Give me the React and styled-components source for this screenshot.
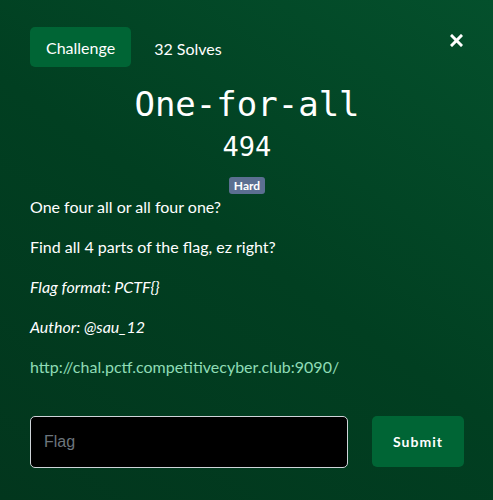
import React from "react";
import styled, { createGlobalStyle } from "styled-components";

const GlobalStyle = createGlobalStyle`
  * { box-sizing: border-box; }
  body {
    margin: 0;
    font-family: Lato, "Noto Sans", sans-serif;
    background: #013d21;
  }
`;

const App = () => {
  return (
    <>
      <GlobalStyle />
      <Modal>
        <Header>
          <Tab>Challenge</Tab>
          <Solves>32 Solves</Solves>
          <Close aria-label="close">
            <svg width="13" height="13" viewBox="0 0 13 13">
              <path
                d="M2 2 L11 11 M11 2 L2 11"
                stroke="#fff"
                strokeWidth="3"
                strokeLinecap="square"
              />
            </svg>
          </Close>
        </Header>
        <Title>One-for-all</Title>
        <Points>494</Points>
        <BadgeRow>
          <Badge>Hard</Badge>
        </BadgeRow>
        <Description>
          <p>One four all or all four one?</p>
          <p>Find all 4 parts of the flag, ez right?</p>
          <p>
            <em>Flag format: PCTF{"{}"}</em>
          </p>
          <p>
            <em>Author: @sau_12</em>
          </p>
          <p>
            <a href="#">http://chal.pctf.competitivecyber.club:9090/</a>
          </p>
        </Description>
        <FlagForm onSubmit={(e) => e.preventDefault()}>
          <FlagInput placeholder="Flag" />
          <SubmitButton type="submit">Submit</SubmitButton>
        </FlagForm>
      </Modal>
    </>
  );
};

export default App;

const Modal = styled.div`
  width: 493px;
  height: 500px;
  padding: 27px 29px 0 30px;
  background: linear-gradient(35deg, #02361d 0%, #013f21 50%, #04502c 100%);
  color: #fff;
  overflow: hidden;
`;

const Header = styled.div`
  display: flex;
  align-items: center;
  height: 40px;
`;

const Tab = styled.div`
  background: #006535;
  border-radius: 5px;
  height: 40px;
  padding: 0 16px;
  display: flex;
  align-items: center;
  font-size: 16px;
  color: #fff;
`;

const Solves = styled.div`
  margin-left: 23px;
  font-size: 16px;
  padding-top: 2px;
`;

const Close = styled.button`
  margin-left: auto;
  margin-top: -14px;
  margin-right: 1px;
  background: none;
  border: none;
  padding: 0;
  display: flex;
  cursor: pointer;
`;

const Title = styled.h1`
  margin: 17px 0 0;
  text-align: center;
  font-family: "DejaVu Sans Mono", "Liberation Mono", monospace;
  font-weight: 400;
  font-size: 34px;
  line-height: 40px;
`;

const Points = styled.div`
  text-align: center;
  font-family: "DejaVu Sans Mono", "Liberation Mono", monospace;
  font-size: 27px;
  line-height: 36px;
  margin-top: 5px;
`;

const BadgeRow = styled.div`
  display: flex;
  justify-content: center;
  margin-top: 12px;
`;

const Badge = styled.span`
  background: #5b6f91;
  border-radius: 3px;
  font-size: 12px;
  font-weight: 700;
  line-height: 17px;
  padding: 0 5px;
  color: #fff;
`;

const Description = styled.div`
  margin-top: 1px;
  font-size: 16px;
  line-height: 24px;
  p {
    margin: 0 0 16px;
  }
  a {
    color: #8fdcb6;
    text-decoration: none;
  }
`;

const FlagForm = styled.form`
  display: flex;
  align-items: flex-start;
  margin-top: 37px;
`;

const FlagInput = styled.input`
  width: 318px;
  height: 52px;
  background: #000;
  border: 1px solid #cfd4d9;
  border-radius: 5px;
  padding: 0 13px;
  font-family: "Liberation Sans", Arial, sans-serif;
  font-size: 16px;
  color: #fff;
  outline: none;
  &::placeholder {
    color: #6c757d;
  }
`;

const SubmitButton = styled.button`
  margin-left: 24px;
  width: 92px;
  height: 51px;
  background: #006535;
  border: none;
  border-radius: 5px;
  color: #fff;
  font-family: Lato, sans-serif;
  font-weight: 700;
  font-size: 14px;
  letter-spacing: 1px;
  cursor: pointer;
`;
